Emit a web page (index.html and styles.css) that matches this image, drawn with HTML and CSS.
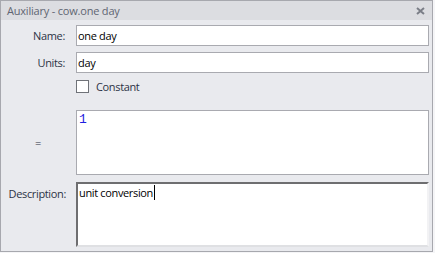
FILE: index.html
```html
<!DOCTYPE html>
<html lang="en">
<head>
  <meta charset="UTF-8" />
  <title>Auxiliary - cow.one day</title>
  <link rel="stylesheet" href="styles.css">
</head>
<body>
  <div class="window">
    <div class="titlebar">
      <span class="title">Auxiliary - cow.one day</span>
      <span class="close">
        <svg width="9" height="8" viewBox="0 0 9 8"><path d="M1 1 L8 7 M8 1 L1 7" stroke="#7b7e87" stroke-width="2"/></svg>
      </span>
    </div>
    <div class="form">
      <label class="lbl">Name:</label>
      <div class="field"><input class="txt" type="text" value="one day"></div>

      <label class="lbl">Units:</label>
      <div class="field"><input class="txt" type="text" value="day"></div>

      <div class="lbl"></div>
      <div class="field check-row">
        <span class="box"></span>
        <span>Constant</span>
      </div>

      <label class="lbl eq-lbl">=</label>
      <div class="field"><div class="equation"><span class="num">1</span></div></div>

      <label class="lbl desc-lbl">Description:</label>
      <div class="field"><div class="desc">unit conversion<span class="caret"></span></div></div>
    </div>
  </div>
</body>
</html>
```

FILE: styles.css
```css
body {
  margin: 0;
  background: #f5f5f7;
  font-family: "Open Sans", "Noto Sans", sans-serif;
  font-size: 11px;
  letter-spacing: -0.35px;
}
.window {
  width: 431px;
  height: 250px;
  border: 1px solid #a7a8ae;
  background: #e9eaee;
}
.titlebar {
  height: 19px;
  background: #dcdde1;
  display: flex;
  align-items: center;
  justify-content: space-between;
  padding: 0 6px 0 6px;
  color: #5f6572;
}
.title {
  font-size: 11px;
  letter-spacing: -0.2px;
}
.close {
  display: flex;
  margin-right: 1px;
}
.form {
  display: grid;
  grid-template-columns: 75px 353px;
  padding-top: 5px;
  row-gap: 6px;
}
.lbl {
  text-align: right;
  padding-right: 11px;
  color: #2c3345;
  display: flex;
  align-items: center;
  justify-content: flex-end;
}
.txt {
  box-sizing: border-box;
  width: 353px;
  height: 21px;
  border: 1px solid #a9aab0;
  background: #fff;
  font: inherit;
  letter-spacing: inherit;
  color: #000;
  padding: 0 1px;
  margin: 0;
  outline: none;
}
.check-row {
  display: flex;
  align-items: center;
  gap: 7px;
  height: 13px;
  margin: 1px 0 11px;
  color: #2c3345;
}
.box {
  width: 11px;
  height: 11px;
  border: 1px solid #6f7278;
  background: #fff;
}
.eq-lbl {
  padding-right: 35px;
}
.equation {
  box-sizing: border-box;
  height: 65px;
  border: 1px solid #a9aab0;
  background: #fff;
  padding: 0 2px;
}
.num {
  font-family: "Liberation Mono", monospace;
  font-size: 13px;
  letter-spacing: 0;
  color: #1f1fe0;
}
.desc-lbl {
  align-items: flex-start;
  padding-top: 5px;
  padding-right: 10px;
}
.desc {
  box-sizing: border-box;
  height: 65px;
  margin-top: 1px;
  border: 2px solid;
  border-color: #6e6e70 #f2f2f4 #dfe0e3 #6e6e70;
  background: #fff;
  padding: 0 1px;
  color: #000;
  line-height: 17px;
}
.caret {
  display: inline-block;
  width: 1px;
  height: 15px;
  background: #000;
  vertical-align: -3px;
  margin-left: 1px;
}
```
